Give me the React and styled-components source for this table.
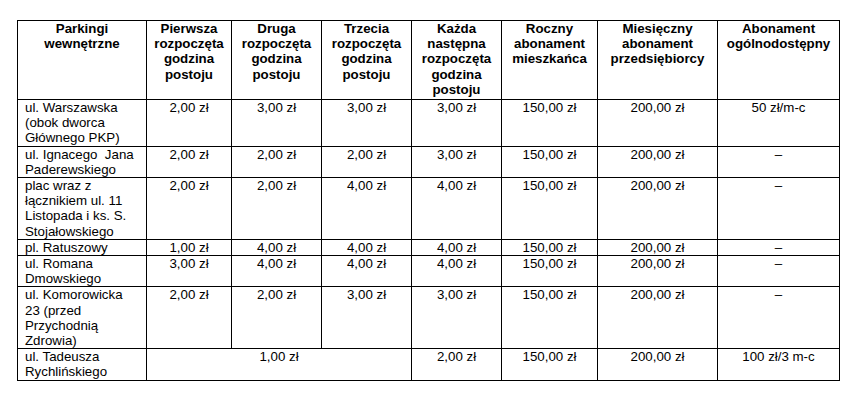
import React from 'react';
import styled, { createGlobalStyle } from 'styled-components';

var Global = createGlobalStyle`
  html, body {
    margin: 0;
    background: #fff;
  }
`

var Page = styled.div`
  padding: 20px 0 0 17px;
  font-family: "Liberation Sans", Arial, sans-serif;
  color: #000;
`

var Table = styled.table`
  border-collapse: collapse;
  table-layout: fixed;
  width: 822px;
  font-size: 13.3px;
  line-height: 15.2px;
`

var Col = styled.col`
  width: ${props => props.$w}px;
`

var HeadCell = styled.th`
  border: 1px solid #000;
  padding: 0 4px 2px;
  font-weight: bold;
  text-align: center;
  vertical-align: top;
`

var NameCell = styled.td`
  border: 1px solid #000;
  padding: 0 9px 0 7px;
  text-align: left;
  vertical-align: top;
  white-space: pre-wrap;
`

var Cell = styled.td`
  border: 1px solid #000;
  padding: 0 4px;
  text-align: center;
  vertical-align: top;
`

var widths = [129, 85, 90, 90, 90, 96, 120, 122];

var heads = [
  'Parkingi wewnętrzne',
  'Pierwsza rozpoczęta godzina postoju',
  'Druga rozpoczęta godzina postoju',
  'Trzecia rozpoczęta godzina postoju',
  'Każda następna rozpoczęta godzina postoju',
  'Roczny abonament mieszkańca',
  'Miesięczny abonament przedsiębiorcy',
  'Abonament ogólnodostępny',
];

var rows = [
  ['ul. Warszawska (obok dworca Głównego PKP)', '2,00 zł', '3,00 zł', '3,00 zł', '3,00 zł', '150,00 zł', '200,00 zł', '50 zł/m-c'],
  ['ul. Ignacego  Jana Paderewskiego', '2,00 zł', '2,00 zł', '2,00 zł', '3,00 zł', '150,00 zł', '200,00 zł', '–'],
  ['plac wraz z łącznikiem ul. 11 Listopada i ks. S. Stojałowskiego', '2,00 zł', '2,00 zł', '4,00 zł', '4,00 zł', '150,00 zł', '200,00 zł', '–'],
  ['pl. Ratuszowy', '1,00 zł', '4,00 zł', '4,00 zł', '4,00 zł', '150,00 zł', '200,00 zł', '–'],
  ['ul. Romana Dmowskiego', '3,00 zł', '4,00 zł', '4,00 zł', '4,00 zł', '150,00 zł', '200,00 zł', '–'],
  ['ul. Komorowicka 23 (przed Przychodnią Zdrowia)', '2,00 zł', '2,00 zł', '3,00 zł', '3,00 zł', '150,00 zł', '200,00 zł', '–'],
];

var App = () => {
  return (
    <Page>
      <Global />
      <Table>
        <colgroup>
          {widths.map((w, i) => <Col key={i} $w={w} />)}
        </colgroup>
        <thead>
          <tr>
            {heads.map((h, i) => <HeadCell key={i}>{h}</HeadCell>)}
          </tr>
        </thead>
        <tbody>
          {rows.map((r, i) => (
            <tr key={i}>
              <NameCell>{r[0]}</NameCell>
              {r.slice(1).map((v, j) => <Cell key={j}>{v}</Cell>)}
            </tr>
          ))}
          <tr>
            <NameCell>ul. Tadeusza Rychlińskiego</NameCell>
            <Cell colSpan={3}>1,00 zł</Cell>
            <Cell>2,00 zł</Cell>
            <Cell>150,00 zł</Cell>
            <Cell>200,00 zł</Cell>
            <Cell>100 zł/3 m-c</Cell>
          </tr>
        </tbody>
      </Table>
    </Page>
  )
};

export default App;
